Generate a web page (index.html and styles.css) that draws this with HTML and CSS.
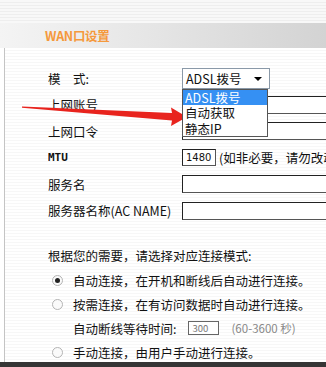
FILE: index.html
```html
<!DOCTYPE html>
<html lang="zh-CN">
  <head>
    <meta charset="UTF-8" />
    <meta name="viewport" content="width=device-width, initial-scale=1.0" />
    <title>WAN口设置</title>
    <link rel="stylesheet" href="styles.css">
  </head>

  <body>
    <div class="top"></div>

    <div class="bar">
      <span class="title">WAN口设置</span>
    </div>

    <div class="panel">
      <div class="form">
        <div class="row">
          <span class="label">模&emsp;式:</span>
          <div class="select">
            ADSL拨号
            <span class="caret"></span>
            <ul class="menu">
              <li class="picked">ADSL拨号</li>
              <li>自动获取</li>
              <li>静态IP</li>
            </ul>
          </div>
        </div>
        <div class="row">
          <span class="label">上网账号</span>
          <span class="input wide"></span>
        </div>
        <div class="row">
          <span class="label">上网口令</span>
          <span class="input wide"></span>
        </div>
        <div class="row">
          <span class="label mtu">MTU</span>
          <span class="input small">1480</span>
          <span class="note">(如非必要，请勿改动)</span>
        </div>
        <div class="row">
          <span class="label">服务名</span>
          <span class="input wide"></span>
        </div>
        <div class="row">
          <span class="label">服务器名称(AC NAME)</span>
          <span class="input wide"></span>
        </div>
      </div>

      <p class="hint">根据您的需要，请选择对应连接模式:</p>

      <div class="option"><span class="radio on"></span>自动连接，在开机和断线后自动进行连接。</div>
      <div class="option"><span class="radio"></span>按需连接，在有访问数据时自动进行连接。</div>
      <div class="option sub">
        自动断线等待时间:
        <span class="input tiny">300</span>
        <span class="range">(60-3600 秒)</span>
      </div>
      <div class="option"><span class="radio"></span>手动连接，由用户手动进行连接。</div>
    </div>

    <div class="bottom"></div>

    <svg class="arrow" width="326" height="367" viewBox="0 0 326 367">
      <polygon
        points="22,106.5 172,113 171,107.5 187,117 171,126 172,120.5 22,107.8"
        fill="#e8231d"
      />
    </svg>
  </body>
</html>
```

FILE: styles.css
```css
* {
  margin: 0;
  padding: 0;
  box-sizing: border-box;
}

body {
  width: 326px;
  height: 367px;
  overflow: hidden;
  position: relative;
  font-family: "Noto Sans CJK SC", "Liberation Sans", sans-serif;
  font-size: 12.5px;
  color: #111;
  background: #fff;
}

.top {
  height: 23px;
  background: repeating-linear-gradient(#f8f8f8 0 2px, #eeeeee 2px 3px);
}

.bar {
  height: 25px;
  display: flex;
  align-items: center;
  padding-left: 45px;
  background: linear-gradient(to right, #f4f4f4, #e6e6e6 45%, #d3d3d3);
}

.title {
  color: #f5993c;
  font-weight: bold;
  font-size: 12.5px;
  letter-spacing: -0.3px;
}

.panel {
  height: 314px;
  overflow: hidden;
  margin-left: 4px;
  border-left: 1px solid #c4c4c4;
  padding: 17px 0 0 43px;
  background: repeating-linear-gradient(#ffffff 0 2px, #f7f7f7 2px 3px);
}

.row {
  height: 26.5px;
  display: flex;
  align-items: center;
}

.label {
  width: 134px;
  flex: none;
  white-space: nowrap;
  overflow: hidden;
}

.mtu {
  font-size: 11px;
  font-weight: bold;
  font-family: "DejaVu Sans Mono", monospace;
}

.select {
  position: relative;
  width: 88px;
  height: 21px;
  border: 1px solid #8a99a8;
  background: #fff;
  padding-left: 3px;
  line-height: 19px;
  font-size: 12.5px;
}

.caret {
  position: absolute;
  right: 7px;
  top: 8px;
  border-left: 4px solid transparent;
  border-right: 4px solid transparent;
  border-top: 4px solid #000;
}

.menu {
  position: absolute;
  top: calc(100% + 1px);
  left: -1px;
  width: 86px;
  list-style: none;
  border: 1px solid #555;
  background: #fff;
  z-index: 2;
}

.menu li {
  height: 15.5px;
  line-height: 15.5px;
  padding-left: 2px;
}

.menu .picked {
  background: #3590f3;
  color: #fff;
}

.input {
  height: 18px;
  border: 1px solid #555;
  border-top-color: #222;
  border-left-color: #222;
  background: #fff;
  flex: none;
}

.wide {
  width: 200px;
}

.small {
  width: 34px;
  height: 17px;
  font-size: 10px;
  line-height: 15px;
  padding-left: 3px;
  font-family: "DejaVu Sans", sans-serif;
}

.note {
  margin-left: 3px;
  white-space: nowrap;
}

.hint {
  margin-top: 20px;
  line-height: 24px;
}

.option {
  height: 24px;
  display: flex;
  align-items: center;
  white-space: nowrap;
}

.radio {
  width: 11px;
  height: 11px;
  margin: 0 10px 0 4px;
  border: 1px solid #b4b4b4;
  border-radius: 50%;
  background: #fafafa;
  display: flex;
  align-items: center;
  justify-content: center;
}

.radio.on::after {
  content: "";
  width: 5px;
  height: 5px;
  border-radius: 50%;
  background: #222;
}

.sub {
  padding-left: 25px;
}

.tiny {
  width: 31px;
  height: 14px;
  margin-left: 12px;
  font-size: 9.5px;
  line-height: 12px;
  padding-left: 3px;
  color: #777;
  border-color: #666;
}

.range {
  margin-left: 12px;
  font-size: 11.5px;
  color: #888;
}

.bottom {
  height: 5px;
  background: #363636;
}

.arrow {
  position: absolute;
  left: 0;
  top: 0;
  pointer-events: none;
}
```
